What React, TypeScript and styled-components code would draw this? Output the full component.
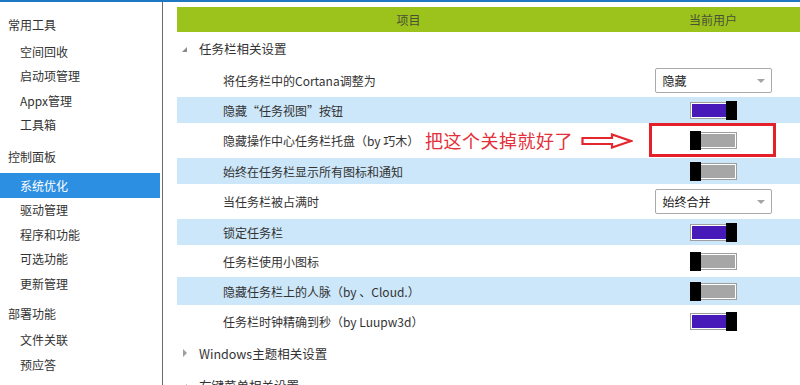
import styled, { createGlobalStyle } from "styled-components"

const GlobalStyle = createGlobalStyle`
    html, body {
        margin: 0;
        padding: 0;
        background: #fff;
    }
    body {
        font-family: "Noto Sans CJK SC", "Noto Sans", sans-serif;
        font-size: 12px;
        color: #333;
    }
`

interface SideEntry {
    label: string
    title?: boolean
    height?: number
    selected?: boolean
}

const sideEntries: SideEntry[] = [
    { label: "常用工具", title: true, height: 33 },
    { label: "空间回收" },
    { label: "启动项管理" },
    { label: "Appx管理" },
    { label: "工具箱" },
    { label: "控制面板", title: true, height: 36 },
    { label: "系统优化", selected: true },
    { label: "驱动管理" },
    { label: "程序和功能" },
    { label: "可选功能" },
    { label: "更新管理" },
    { label: "部署功能", title: true, height: 32 },
    { label: "文件关联" },
    { label: "预应答" },
]

type Control = { kind: "select"; value: string } | { kind: "toggle"; on: boolean }

interface SettingRow {
    label: string
    height: number
    shaded?: boolean
    control: Control
    annotated?: boolean
}

const taskbarRows: SettingRow[] = [
    { label: "将任务栏中的Cortana调整为", height: 33, control: { kind: "select", value: "隐藏" } },
    { label: "隐藏“任务视图”按钮", height: 26, shaded: true, control: { kind: "toggle", on: true } },
    { label: "隐藏操作中心任务栏托盘（by 巧木）", height: 35, control: { kind: "toggle", on: false }, annotated: true },
    { label: "始终在任务栏显示所有图标和通知", height: 26, shaded: true, control: { kind: "toggle", on: false } },
    { label: "当任务栏被占满时", height: 35, control: { kind: "select", value: "始终合并" } },
    { label: "锁定任务栏", height: 26, shaded: true, control: { kind: "toggle", on: true } },
    { label: "任务栏使用小图标", height: 32, control: { kind: "toggle", on: false } },
    { label: "隐藏任务栏上的人脉（by 、Cloud.）", height: 28, shaded: true, control: { kind: "toggle", on: false } },
    { label: "任务栏时钟精确到秒（by Luupw3d）", height: 32, control: { kind: "toggle", on: true } },
]

const renderControl = (control: Control) => {
    if (control.kind === "select") {
        return <SelectBox>
            <span>{control.value}</span>
            <Caret />
        </SelectBox>
    }
    return <Toggle $on={control.on}>
        <Knob $on={control.on} />
    </Toggle>
}

export default function App() {
    return <>
        <GlobalStyle />
        <Window>
            <Sidebar>
                {sideEntries.map((entry, index) => entry.title
                    ? <SideTitle key={`side-${index}`} $height={entry.height ?? 30}>{entry.label}</SideTitle>
                    : <SideItem key={`side-${index}`} $selected={!!entry.selected}>{entry.label}</SideItem>
                )}
            </Sidebar>
            <Main>
                <HeaderBar>
                    <HeaderCell>项目</HeaderCell>
                    <HeaderCell>当前用户</HeaderCell>
                </HeaderBar>

                <GroupRow>
                    <ExpandedMark />
                    任务栏相关设置
                </GroupRow>

                {taskbarRows.map((row, index) => <Row key={`row-${index}`} $height={row.height} $shaded={!!row.shaded}>
                    <RowLabel>{row.label}</RowLabel>
                    <RowControl>{renderControl(row.control)}</RowControl>
                    {row.annotated && <>
                        <Note>把这个关掉就好了</Note>
                        <NoteArrow width="52" height="16" viewBox="0 0 52 16">
                            <path d="M1.5 5 H31 V1.5 L50 8 L31 14.5 V11 H1.5 Z" fill="none" stroke="#e4262e" strokeWidth="2.2" strokeLinejoin="miter" />
                        </NoteArrow>
                        <HighlightBox />
                    </>}
                </Row>)}

                <GroupRow>
                    <CollapsedMark />
                    Windows主题相关设置
                </GroupRow>
                <GroupRow>
                    <ExpandedMark />
                    右键菜单相关设置
                </GroupRow>
            </Main>
        </Window>
    </>
}

const Window = styled.div`
    display: flex;
    width: 800px;
    height: 385px;
    overflow: hidden;
    border-top: 2px solid #1d77c2;
    box-sizing: border-box;
    background: #fff;
`

const Sidebar = styled.div`
    width: 162px;
    flex-shrink: 0;
    border-right: 1px solid #6a6a6a;
    padding-top: 4px;
    display: flex;
    flex-direction: column;
`

const SideTitle = styled.div<{ $height: number }>`
    height: ${p => p.$height}px;
    padding-left: 8px;
    padding-top: 3px;
    box-sizing: border-box;
    display: flex;
    align-items: center;
    font-size: 12px;
    color: #333;
    flex-shrink: 0;
`

const SideItem = styled.div<{ $selected: boolean }>`
    height: 24.5px;
    flex-shrink: 0;
    margin-right: 2px;
    padding-left: 20px;
    display: flex;
    align-items: center;
    font-size: 12px;
    color: ${p => p.$selected ? "#fff" : "#333"};
    background: ${p => p.$selected ? "#2d8fe2" : "transparent"};
`

const Main = styled.div`
    flex: 1;
    padding-left: 14px;
    padding-top: 5px;
    display: flex;
    flex-direction: column;
`

const HeaderBar = styled.div`
    height: 25px;
    flex-shrink: 0;
    display: grid;
    grid-template-columns: 463px 146px;
    background: #9bc31b;
`

const HeaderCell = styled.div`
    display: flex;
    align-items: center;
    justify-content: center;
    font-size: 12px;
    color: #4a4f3a;
`

const GroupRow = styled.div`
    height: 32px;
    flex-shrink: 0;
    display: flex;
    align-items: center;
    padding-left: 5px;
    font-size: 12.5px;
    color: #333;
`

const ExpandedMark = styled.span`
    width: 0;
    height: 0;
    margin-right: 12px;
    margin-top: 2px;
    border-left: 5px solid transparent;
    border-bottom: 5px solid #8a8a8a;
`

const CollapsedMark = styled.span`
    width: 0;
    height: 0;
    margin-right: 12px;
    margin-left: 1px;
    border-top: 4px solid transparent;
    border-bottom: 4px solid transparent;
    border-left: 4px solid #a0a0a0;
`

const Row = styled.div<{ $height: number; $shaded: boolean }>`
    position: relative;
    height: ${p => p.$height}px;
    flex-shrink: 0;
    display: grid;
    grid-template-columns: 463px 146px;
    align-items: center;
    background: ${p => p.$shaded ? "#cce7f9" : "#fff"};
`

const RowLabel = styled.div`
    padding-left: 46px;
    font-size: 12px;
    color: #333;
    white-space: nowrap;
`

const RowControl = styled.div`
    display: flex;
    justify-content: center;
    align-items: center;
`

const SelectBox = styled.div`
    width: 117px;
    height: 25px;
    box-sizing: border-box;
    border: 1px solid #a9a9a9;
    border-radius: 2px;
    background: #fff;
    display: flex;
    align-items: center;
    justify-content: space-between;
    padding: 0 6px 0 7px;
    font-size: 12px;
    color: #222;
`

const Caret = styled.span`
    width: 0;
    height: 0;
    border-left: 4px solid transparent;
    border-right: 4px solid transparent;
    border-top: 4px solid #a5a5a5;
`

const Toggle = styled.div<{ $on: boolean }>`
    position: relative;
    width: 47px;
    height: 17px;
    box-sizing: border-box;
    border: 1px solid #9e9e9e;
    box-shadow: inset 0 0 0 1px #fff;
    background: ${p => p.$on ? "#4719b8" : "#a6a6a6"};
`

const Knob = styled.div<{ $on: boolean }>`
    position: absolute;
    top: -2px;
    ${p => p.$on ? "right: -1px;" : "left: -1px;"}
    width: 11px;
    height: 19px;
    background: #000;
`

const Note = styled.div`
    position: absolute;
    left: 248px;
    top: 50%;
    transform: translateY(-52%);
    font-size: 18px;
    color: #e4303a;
    white-space: nowrap;
    letter-spacing: 0.5px;
`

const NoteArrow = styled.svg`
    position: absolute;
    left: 404px;
    top: 50%;
    transform: translateY(-50%);
`

const HighlightBox = styled.div`
    position: absolute;
    left: 472px;
    top: 0;
    width: 127px;
    height: 34px;
    box-sizing: border-box;
    border: 3px solid #e4202a;
`
